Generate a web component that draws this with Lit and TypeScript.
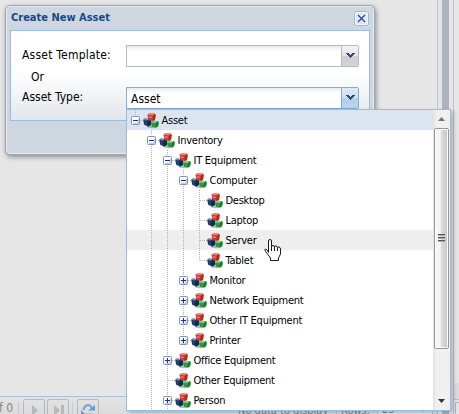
import { LitElement, html, svg, css } from "lit";
import { customElement } from "lit/decorators.js";
import { classMap } from "lit/directives/class-map.js";

type Node = { label: string; open?: boolean; kids?: Node[]; hover?: boolean };

const TREE: Node = {
  label: "Asset", open: true, kids: [
    { label: "Inventory", open: true, kids: [
      { label: "IT Equipment", open: true, kids: [
        { label: "Computer", open: true, kids: [
          { label: "Desktop" }, { label: "Laptop" }, { label: "Server", hover: true }, { label: "Tablet" },
        ] },
        { label: "Monitor", kids: [] },
        { label: "Network Equipment", kids: [] },
        { label: "Other IT Equipment", kids: [] },
        { label: "Printer", kids: [] },
      ] },
      { label: "Office Equipment", kids: [] },
      { label: "Other Equipment" },
      { label: "Person", kids: [] },
      { label: "Vehicle" },
    ] },
    { label: "Software", kids: [] },
  ],
};

// How many rows fit into the open list.
const VISIBLE_ROWS = 15;

type Row = { node: Node; guides: boolean[]; last: boolean };

function flatten(node: Node, guides: boolean[], last: boolean, out: Row[]): Row[] {
  out.push({ node, guides, last });
  const kids = node.open ? node.kids ?? [] : [];
  kids.forEach((k, i) => flatten(k, [...guides, !last], i === kids.length - 1, out));
  return out;
}

const dots = (x1: number, y1: number, x2: number, y2: number) =>
  svg`<line x1=${x1} y1=${y1} x2=${x2} y2=${y2} stroke="#b4b4b4" stroke-dasharray="1 1"/>`;

const guideCell = (on: boolean) => html`<svg class="cell" width="16" height="20">${on ? dots(8.5, 0, 8.5, 20) : ""}</svg>`;

const elbowCell = (row: Row) => html`<svg class="cell" width="16" height="20">
  ${dots(8.5, 0, 8.5, row.last ? 11 : 20)}
  ${dots(9, 10.5, 16, 10.5)}
  ${row.node.kids ? svg`
    <rect x="4.5" y="6.5" width="8" height="8" rx=".8" fill="#fff" stroke="#7d95b9"/>
    <path d="M6 13.5H12M11.5 9V14" stroke="#c3cede" fill="none"/>
    <path d="M6 12.5H11M10.5 9V12" stroke="#e2e8f1" fill="none"/>
    <path d=${row.node.open ? "M6 10.5H11" : "M6 10.5H11M8.5 8V13"} stroke="#20376b" fill="none"/>` : ""}
</svg>`;

const cubes = html`<svg class="cubes" width="16" height="16" viewBox="0 0 16 16">
  <ellipse cx="9.500" cy="13.800" rx="6" ry="1.500" fill="#777d7e" opacity=".5"/>
  <path d="M.3 7.500Q.2 5.800 2 5.600L6 5.900 8.500 7.500 8 12 5 13.600 1.200 11.800Z" fill="#203b6c"/>
  <path d="M.8 6.800 2.500 5.600 5.500 6 3.800 7.600Z" fill="#7b93b8"/>
  <path d="M4.500 8.500 7.500 8 7.800 12 5 13.600Z" fill="#10234a"/>
  <path d="M4.500 1.600Q6.500.2 8 .3L11.500.6Q12.900 1 12.700 2.500L12 6.700 9.500 8.100 5.300 7.100Z" fill="#cf3a2c"/>
  <path d="M4.700 1.700 7 .5 11.800.9 9.900 2.300Z" fill="#ee8d7d"/>
  <path d="M10 2.500 12.600 1.600 12 6.700 9.700 8Z" fill="#ab2720"/>
  <path d="m5.600 3 3 .5V5.300L5.900 4.800Z" fill="#ec7766"/>
  <path d="M8 9.400 10.500 7.700 14.600 8.100Q15.800 8.400 15.700 9.700L15.200 12.700 12.500 14.600 8.700 13.700Z" fill="#2c9a3b"/>
  <path d="M8.200 9.400 10.500 7.900 14.900 8.300 12.800 9.900Z" fill="#84d080"/>
  <path d="M12.900 10.100 15.600 8.700 15.200 12.700 12.700 14.400Z" fill="#187531"/>
</svg>`;

const chevron = html`<svg width="9" height="6" viewBox="0 0 9 6" shape-rendering="crispEdges">
  <path d="M0 0h3v1h1v1h1V1h1V0h3v1H8v1H7v1H6v1H5v1H4V4H3V3H2V2H1V1H0z" fill="#2c4c86"/>
</svg>`;

@customElement("asset-tree")
export class AssetTree extends LitElement {
  static styles = css`
    :host { display: flex; height: 300px; background: #fff; border: 1px solid #99bbe8;
      box-shadow: 3px 2px 4px rgba(0,0,0,.2); font: 11px/22px "DejaVu Sans Condensed", "DejaVu Sans", sans-serif; }
    .rows { flex: 1; overflow: hidden; }
    .row { display: flex; height: 20px; color: #000; white-space: nowrap; }
    .root { background: #dce4f1; }
    .hover { background: #eee; }
    .cell { flex: none; }
    .cubes { flex: none; margin: 3px 2px 0 0; }
    .label { letter-spacing: -0.25px; padding-left: .5px; }
    .bar { width: 17px; background: linear-gradient(90deg, #e3e3e3, #f0f0f0 4px); display: flex; flex-direction: column; }
    .arrow { height: 18px; display: flex; align-items: center; justify-content: center; }
    .thumb { box-sizing: border-box; height: 221px; width: 15px; margin-left: 1px; border: 1px solid #979797; border-radius: 2px;
      box-shadow: inset 0 0 0 1px #fff; background: linear-gradient(90deg, #f5f5f5 0 40%, #dcdcdf 50%, #c4c4ca);
      display: flex; flex-direction: column; align-items: center; justify-content: center; }
    .grip { width: 7px; height: 2px; margin-bottom: 1px; background: linear-gradient(#555 50%, #aaa 50%); }
    .space { flex: 1; }
  `;
  render() {
    return html`
      <div class="rows">
        ${flatten(TREE, [], true, []).slice(0, VISIBLE_ROWS).map((r, i) => html`
          <div class=${classMap({ row: true, root: i === 0, hover: !!r.node.hover })}>
            ${r.guides.map(guideCell)}${elbowCell(r)}${cubes}
            <span class="label">${r.node.label}</span>
          </div>`)}
      </div>
      <div class="bar">
        <div class="arrow"><svg width="7" height="4"><path d="M0 4 3.5 0 7 4z" fill="#777"/></svg></div>
        <div class="thumb"><i class="grip"></i><i class="grip"></i><i class="grip"></i></div>
        <div class="space"></div>
        <div class="arrow"><svg width="7" height="4"><path d="M0 0 3.5 4 7 0z" fill="#333"/></svg></div>
      </div>`;
  }
}

@customElement("asset-dialog")
export class AssetDialog extends LitElement {
  static styles = css`
    :host { display: block; box-sizing: border-box; width: 370px; height: 150px; padding: 0 4px; border: 1px solid #9ba5b3; border-radius: 5px;
      background: #ced6e0; box-shadow: inset 0 0 0 1px #e9edf3, 1px 2px 5px rgba(0,0,0,.4);
      font: 12px/16px "DejaVu Sans Condensed", "DejaVu Sans", sans-serif; color: #000; }
    .head { display: flex; align-items: center; justify-content: space-between; height: 24px; padding: 0 1px; }
    .title { font-weight: bold; font-size: 11px; color: #15498b; }
    .close { display: block; }
    .form { box-sizing: border-box; height: 91px; border: 1px solid #99bbe8; padding: 14px 10px 0 10px;
      background: linear-gradient(#fff 45%, #e3e7ea); }
    .line { display: flex; height: 22px; }
    .caption { box-sizing: border-box; width: 105px; padding: 2px 0 0 1px; white-space: nowrap; }
    .wide { letter-spacing: .22px; }
    .or { height: 20px; padding-left: 10px; line-height: 20px; }
    .combo { box-sizing: border-box; width: 233px; height: 22px; display: flex; border: 1px solid #b5b8c8; border-radius: 0 2px 2px 0;
      background: linear-gradient(#e8ebee, #fff 5px); }
    .value { flex: 1; padding-left: 4px; line-height: 22px; }
    .trigger { width: 16px; border-left: 1px solid #b5b8c8; background: linear-gradient(#f5f5f5, #e2e2e2 50%, #cfcfcf 51%, #d3d3d3);
      display: flex; align-items: center; justify-content: center; }
    .active { border-color: #7eadd9; }
    .active .trigger { border-color: #7eadd9; background: linear-gradient(#dce9f8, #cddff4 50%, #b3cdec 51%, #bdd3ed); }
  `;
  render() {
    return html`
      <div class="head">
        <div class="title">Create New Asset</div>
        <svg class="close" width="15" height="15">
          <rect x=".5" y=".5" width="14" height="14" rx="2" fill="#f3f8fe" stroke="#99bbe8"/>
          <rect x="2" y="2" width="11" height="11" rx="1" fill="#d7e7f8"/>
          <path d="m4 4 7 7M11 4l-7 7" stroke="#fff" stroke-width="3"/>
          <path d="m4 4 7 7M11 4l-7 7" stroke="#2c4fa0" stroke-width="1.6"/>
        </svg>
      </div>
      <div class="form">
        <div class="line"><span class="caption wide">Asset Template:</span><div class="combo"><div class="value"></div><div class="trigger">${chevron}</div></div></div>
        <div class="or">Or</div>
        <div class="line"><span class="caption">Asset Type:</span><div class="combo active"><div class="value">Asset</div><div class="trigger">${chevron}</div></div></div>
      </div>`;
  }
}

@customElement("app-root")
export class AppRoot extends LitElement {
  static styles = css`
    :host { display: block; position: relative; width: 459px; height: 414px; overflow: hidden; background: #e6e6e6;
      font: 11px/14px "DejaVu Sans Condensed", "DejaVu Sans", sans-serif; }
    .page { display: flex; height: 414px; }
    .main { width: 437px; display: flex; flex-direction: column; border-right: 1px solid #b4c4d6; }
    .canvas { flex: 1; }
    .pager { box-sizing: border-box; height: 18px; border-top: 1px solid #abc0da; background: linear-gradient(#e3e3e4, #dadbdd);
      display: flex; align-items: flex-start; padding-top: 2px; color: #858585; white-space: nowrap; }
    .count { width: 18px; padding-top: 2px; font-size: 12px; margin-left: -1px; }
    .sep { flex: none; width: 1px; height: 16px; margin: 3px 4px 0 1px; background: #c6c8ca; }
    .btn { box-sizing: border-box; flex: none; width: 22px; height: 22px; border: 1px solid #b0b8c0; border-radius: 2px; margin-right: 2px; padding: 3px 2px; }
    .note { flex: none; padding-top: 5px; margin-left: 137px; width: 97px; }
    .rowsLabel { flex: none; width: 36px; padding-top: 5px; }
    .select { box-sizing: border-box; flex: none; display: flex; align-items: center; justify-content: space-between;
      width: 56px; height: 20px; padding: 2px 6px 0 4px; border: 1px solid #bcc2c9; background: #e4e4e5; }
    .split { width: 7px; margin-left: 4px; background: #adb4bd; }
    .side { box-sizing: border-box; width: 6px; margin-left: 4px; border-left: 1px solid #b4c4d6; display: flex; flex-direction: column; }
    .foot { height: 16px; margin-top: auto; background: #dcdcdd; border-bottom: 1px solid #abc0da; }
    .tab { height: 11px; margin: 2px 0 0 1px; border: 1px solid #abb9c8; border-width: 1px 0 0 1px; }
    asset-dialog { position: absolute; left: 5px; top: 5px; }
    asset-tree { position: absolute; left: 126px; top: 109px; width: 323px; }
    .cursor { position: absolute; left: 264px; top: 239px; }
  `;
  render() {
    return html`
      <div class="page">
        <div class="main">
          <div class="canvas"></div>
          <div class="pager">
            <span class="count">f 0</span><i class="sep"></i>
            <span class="btn"><svg width="16" height="14"><path d="M6 2v11l6-5.5z" fill="#b6b9bc"/></svg></span>
            <span class="btn"><svg width="16" height="14"><path d="M4 2v11l6-5.5zM11 2h3v11h-3z" fill="#b6b9bc"/></svg></span>
            <i class="sep"></i>
            <span class="btn"><svg width="16" height="14">
              <path d="M3.500 7C4 2 9.500 0 12 5" fill="none" stroke="#79a5d3" stroke-width="2.200"/>
              <path d="M8 7.500h7V2z" fill="#6c9bce"/>
              <path d="M1 7v6h6z" fill="#6c9bce"/>
              <path d="M4 11.500h9" stroke="#8fb4dc" stroke-width="2"/>
            </svg></span>
            <span class="note">No data to display</span><i class="sep"></i><span class="rowsLabel">Rows:</span>
            <span class="select"><span>25</span><svg width="7" height="4"><path d="M0 0h7L3.500 4z" fill="#7b94b5"/></svg></span>
          </div>
        </div>
        <div class="split"></div>
        <div class="side"><div class="foot"></div><div class="tab"></div></div>
      </div>
      <asset-dialog></asset-dialog>
      <asset-tree></asset-tree>
      <svg class="cursor" width="18" height="23" viewBox="0 0 18 23">
        <path d="M4.500 13.500V2Q4.500.5 6 .5T7.500 2v6q0-1.500 1.500-1.500T10.500 8q0-1.200 1.500-1 1.500.2 1.500 1.800 0-1 1.500-.8 1.500.5 1.500 2V15l-2 4v2.500H6.500V19l-5-6.500Q.2 10.500 1.500 10q1.300-.2 3 3.500z" fill="#fff" stroke="#1a1a2a"/>
        <path d="M7.500 8v4M10.500 8v4M13.500 9v3" stroke="#1a1a2a"/>
      </svg>`;
  }
}
